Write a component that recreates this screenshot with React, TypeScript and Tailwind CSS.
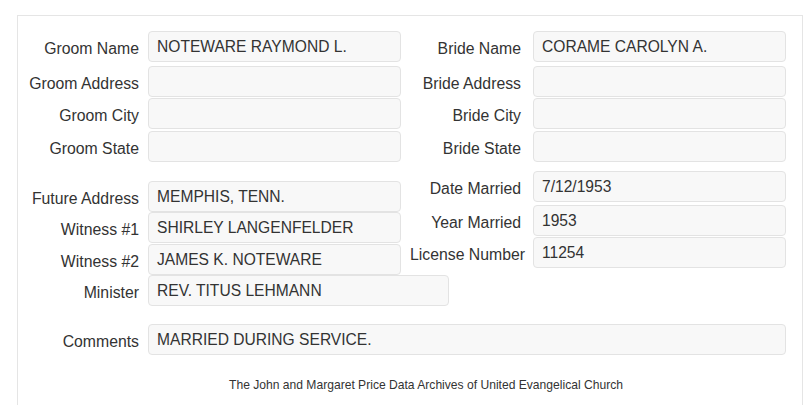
import React from 'react'

type Field = { label: string; value?: string; mt: string }

const font = { fontFamily: '"Liberation Sans", Arial, sans-serif' }

const groomFields: Field[] = [
  { label: 'Groom Name', value: 'NOTEWARE RAYMOND L.', mt: 'mt-0' },
  { label: 'Groom Address', mt: 'mt-[4px]' },
  { label: 'Groom City', mt: 'mt-[1px]' },
  { label: 'Groom State', mt: 'mt-[2px]' },
]

const brideFields: Field[] = [
  { label: 'Bride Name', value: 'CORAME CAROLYN A.', mt: 'mt-0' },
  { label: 'Bride Address', mt: 'mt-[4px]' },
  { label: 'Bride City', mt: 'mt-[1px]' },
  { label: 'Bride State', mt: 'mt-[2px]' },
]

const extraLeft: Field[] = [
  { label: 'Future Address', value: 'MEMPHIS, TENN.', mt: 'mt-0' },
  { label: 'Witness #1', value: 'SHIRLEY LANGENFELDER', mt: 'mt-0' },
  { label: 'Witness #2', value: 'JAMES K. NOTEWARE', mt: 'mt-[1px]' },
]

const extraRight: Field[] = [
  { label: 'Date Married', value: '7/12/1953', mt: 'mt-0' },
  { label: 'Year Married', value: '1953', mt: 'mt-[3px]' },
  { label: 'License Number', value: '11254', mt: 'mt-[1px]' },
]

function Box({ value, width = 'w-[253px]' }: { value?: string; width?: string }) {
  return (
    <div
      className={`${width} h-[31px] shrink-0 rounded-[4px] border border-[#e3e3e3] bg-[#f8f8f8] pl-[8px] pt-[1px] flex items-center text-[15.6px] text-[#333]`}
    >
      {value}
    </div>
  )
}

function LeftRow({ f, width }: { f: Field; width?: string }) {
  return (
    <div className={`flex items-center ${f.mt}`}>
      <div className="w-[121px] shrink-0 text-right pt-[4px] mr-[9px] text-[15.8px] text-[#333] whitespace-nowrap">
        {f.label}
      </div>
      <Box value={f.value} width={width} />
    </div>
  )
}

function RightRow({ f }: { f: Field }) {
  const tight = f.label === 'License Number'
  return (
    <div className={`flex items-center ${f.mt}`}>
      <div
        className={`w-[124px] shrink-0 text-right pt-[4px] mr-[8px] text-[15.8px] text-[#333] whitespace-nowrap ${tight ? 'pr-0' : 'pr-[4px]'}`}
      >
        {f.label}
      </div>
      <Box value={f.value} />
    </div>
  )
}

export default function App() {
  return (
    <div className="w-[805px] h-[405px] overflow-hidden bg-white pt-[15px] pl-[17px] pr-[2px]" style={font}>
      <div className="border border-[#e5e5e5] h-[420px] pt-[15px]">
        {/* names and addresses */}
        <div className="flex">
          <div className="w-[383px] shrink-0 flex flex-col">
            {groomFields.map((f) => (
              <LeftRow key={f.label} f={f} />
            ))}
          </div>
          <div className="flex flex-col">
            {brideFields.map((f) => (
              <RightRow key={f.label} f={f} />
            ))}
          </div>
        </div>

        {/* wedding details */}
        <div className="flex mt-[9px]">
          <div className="w-[383px] shrink-0 flex flex-col mt-[10px]">
            {extraLeft.map((f) => (
              <LeftRow key={f.label} f={f} />
            ))}
            <LeftRow f={{ label: 'Minister', value: 'REV. TITUS LEHMANN', mt: 'mt-0' }} width="w-[301px]" />
          </div>
          <div className="flex flex-col">
            {extraRight.map((f) => (
              <RightRow key={f.label} f={f} />
            ))}
          </div>
        </div>

        <div className="mt-[18px]">
          <LeftRow f={{ label: 'Comments', value: 'MARRIED DURING SERVICE.', mt: 'mt-0' }} width="w-[638px]" />
        </div>

        <div className="mt-[21px] pl-[32px] text-center text-[12.1px] text-[#333]">
          The John and Margaret Price Data Archives of United Evangelical Church
        </div>
      </div>
    </div>
  )
}
